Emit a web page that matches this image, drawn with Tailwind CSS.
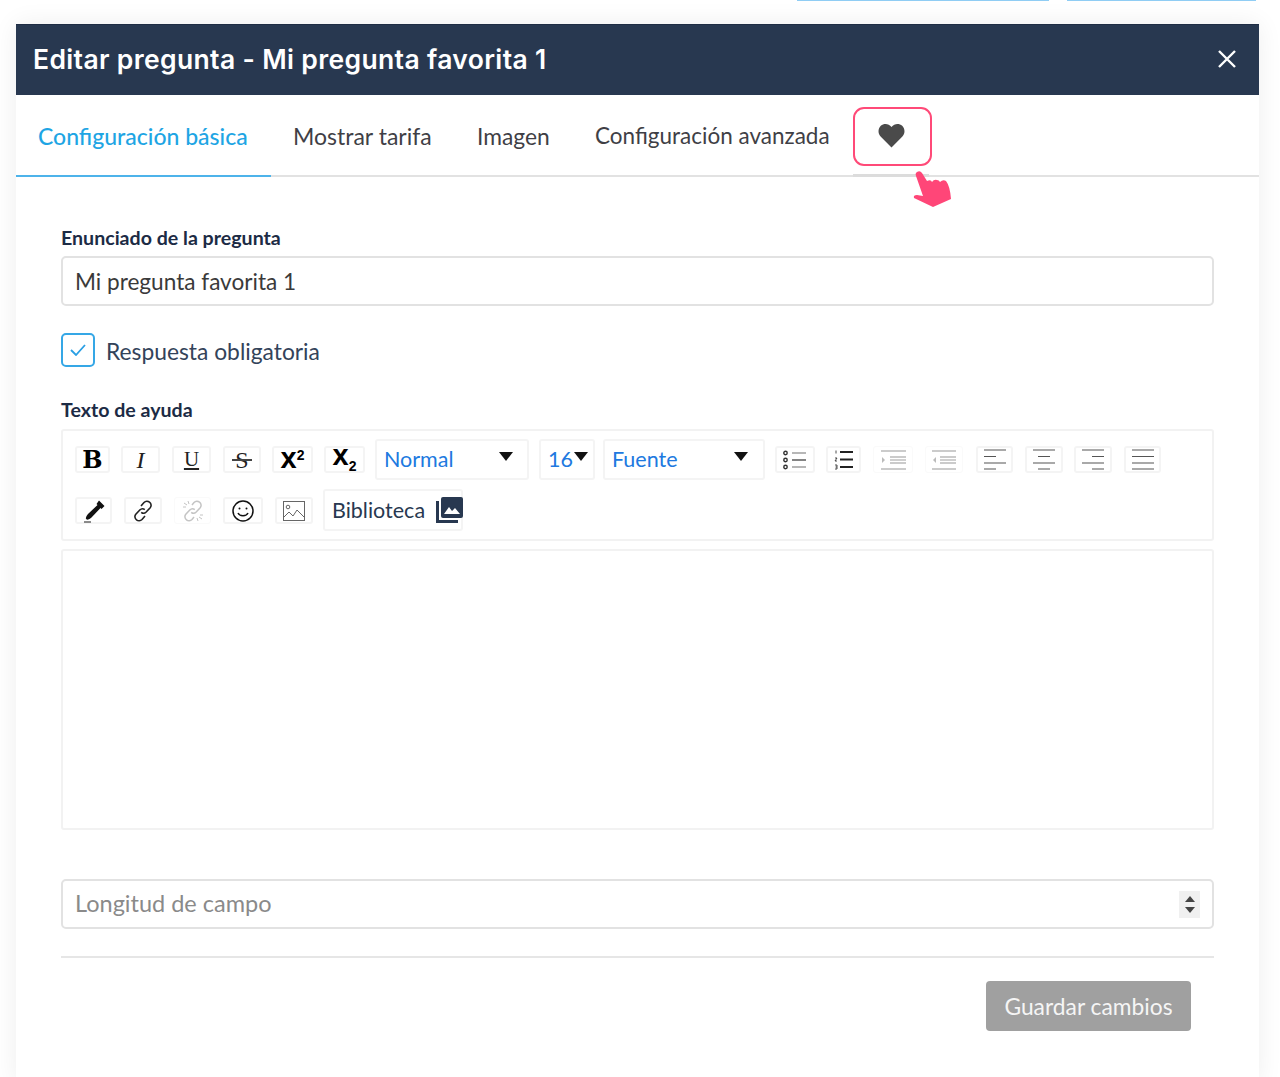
<!DOCTYPE html>
<html lang="es">
<head>
<meta charset="utf-8">
<script src="https://cdn.jsdelivr.net/npm/@tailwindcss/browser@4"></script>
<title>Editar pregunta</title>
</head>
<body class="bg-white font-['Lato','Liberation_Sans',sans-serif] overflow-hidden">
<div class="w-[1280px] h-[1077px] overflow-hidden">
  <div class="flex h-px pl-[797px]">
    <div class="w-[252px] h-px bg-[#90cdf4]"></div>
    <div class="w-[189px] h-px ml-[18px] bg-[#90cdf4]"></div>
  </div>
  <div class="relative mt-[23px] ml-4 w-[1243px] h-[1060px] bg-white shadow-[0_0_24px_rgba(0,0,0,0.07)]">
    <header class="h-[71px] bg-[#283850] flex items-center justify-between pl-[17px] pr-[22px] pb-[1px] border-t border-[#1f2d44]">
      <h1 class="font-['Inter',sans-serif] font-semibold text-[26.5px] tracking-[0.35px] text-white">Editar pregunta - Mi pregunta favorita 1</h1>
      <svg class="w-[20px] h-[20px] -mt-px" viewBox="0 0 20 20" fill="none" stroke="#fff" stroke-width="2.4"><path d="M2 2l16 16M18 2L2 18"/></svg>
    </header>
    <nav class="relative flex h-[82px] border-b-2 border-[#e2e2e2] text-[23px] leading-[34px] text-[#3f3f46]">
      <div class="w-[255px] -mb-[2px] pl-[22px] pt-[24px] font-medium text-[#1ea5e4] border-b-2 border-[#4db3ea]">Configuración básica</div>
      <div class="ml-[22px] pt-[24px] w-[138px] whitespace-nowrap">Mostrar tarifa</div>
      <div class="ml-[46px] pt-[24px] w-[72px] text-[22.8px]">Imagen</div>
      <div class="ml-[46px] pt-[24px] w-[235px] whitespace-nowrap text-[22.5px]">Configuración avanzada</div>
      <div class="ml-[23px] w-[76px] -mb-[2px] flex items-start justify-center pt-[28px] border-b-[3px] border-[#dcdcdc]">
        <svg class="w-[27px] h-[25px]" viewBox="0 0 27 25" fill="#4a4a4a"><path d="M13.5 24.5L2.6 13.6C-0.4 10.4 0 5.5 2.8 2.8 5.8 0 10.6 0.2 13.5 4 16.4 0.2 21.2 0 24.2 2.8 27 5.5 27.4 10.4 24.4 13.6Z"/></svg>
      </div>
      <div class="absolute left-[837px] top-[12px] w-[79px] h-[59px] rounded-[11px] border-[2.5px] border-[#ff4a78]"></div>
      <svg class="absolute left-[896px] top-[75px] w-[40px] h-[40px]" viewBox="0 0 40 40" fill="#ff4678"><path d="M5 2Q8 0 10 3L15 11Q19 9 20 12Q22 9 25 10Q27 10 28 12Q31 9 34 11Q38 16 39 29L21 37L2 28Q1 25 5 25L11 26L4 6Q3 3 5 2Z"/></svg>
    </nav>
    <main class="px-[45px] pt-[50px]">
      <label class="block text-[19.6px] font-bold leading-[21px] text-[#1c2b45]">Enunciado de la pregunta</label>
      <div class="mt-[8px] h-[50px] flex items-center px-[12px] pt-[2px] border-2 border-[#e2e2e2] rounded-[5px] text-[22.6px] text-[#3a3a3a]">Mi pregunta favorita 1</div>
      <div class="mt-[27px] flex items-center h-[33px]">
        <div class="w-[34px] h-[34px] flex items-center justify-center rounded-[5px] border-2 border-[#35a7e6]">
          <svg class="w-[16px] h-[12px]" viewBox="0 0 16 12" fill="none" stroke="#2a9fe4" stroke-width="1.8"><path d="M1 6l5 5 9-10"/></svg>
        </div>
        <span class="ml-[11px] text-[22.8px] text-[#33435a] relative top-[2px]">Respuesta obligatoria</span>
      </div>
      <label class="block mt-[33px] text-[19.6px] font-bold leading-[22px] text-[#1c2b45]">Texto de ayuda</label>

      <div class="mt-[8px] h-[112px] border-2 border-[#f2f2f2] rounded-[3px] pl-[12px]">
        <div class="flex items-start pt-[8px] h-[58px]">
          <div class="mt-[7px] w-[35px] h-[27px] border-2 border-[#f4f4f4] rounded-[3px] flex items-center justify-center font-['DejaVu_Serif',serif] font-bold text-[24px] leading-none text-black">B</div>
          <div class="mt-[7px] ml-[11px] w-[39px] h-[27px] border-2 border-[#f4f4f4] rounded-[3px] flex items-center justify-center font-['Liberation_Serif',serif] italic text-[24px] leading-none text-[#222]">I</div>
          <div class="mt-[7px] ml-[12px] w-[39px] h-[27px] border-2 border-[#f4f4f4] rounded-[3px] flex items-center justify-center font-['Liberation_Serif',serif] underline text-[21px] leading-none text-[#222]">U</div>
          <div class="relative mt-[7px] ml-[12px] w-[38px] h-[27px] border-2 border-[#f4f4f4] rounded-[3px] flex items-center justify-center font-['Liberation_Serif',serif] text-[24px] leading-none text-[#222]">S<span class="absolute left-[7px] right-[7px] top-[11px] h-[2px] bg-[#444]"></span></div>
          <div class="mt-[7px] ml-[11px] w-[41px] h-[27px] border-2 border-[#f4f4f4] rounded-[3px] flex items-center justify-center font-['Liberation_Sans',sans-serif] leading-none text-black"><span class="font-bold text-[29px] relative -top-[1px]">x</span><span class="text-[14px] font-bold relative -top-[5px]">2</span></div>
          <div class="mt-[7px] ml-[11px] w-[41px] h-[27px] border-2 border-[#f4f4f4] rounded-[3px] flex items-center justify-center font-['Liberation_Sans',sans-serif] leading-none text-black"><span class="font-bold text-[29px] relative -top-[4px]">x</span><span class="text-[14px] font-bold relative top-[6px]">2</span></div>
          <div class="ml-[10px] w-[154px] h-[41px] border-2 border-[#f4f4f4] rounded-[3px] flex items-center justify-between pl-[7px] pr-[14px] text-[21.5px] text-[#2079e0]"><span>Normal</span><svg class="w-[14px] h-[9px] -mt-[7px]" viewBox="0 0 14 9" fill="#111"><path d="M0 0h14L7 9z"/></svg></div>
          <div class="ml-[10px] w-[56px] h-[41px] border-2 border-[#f4f4f4] rounded-[3px] flex items-center justify-between pl-[7px] pr-[5px] text-[21.5px] text-[#2079e0]"><span>16</span><svg class="w-[14px] h-[9px] -mt-[7px]" viewBox="0 0 14 9" fill="#111"><path d="M0 0h14L7 9z"/></svg></div>
          <div class="ml-[8px] w-[162px] h-[41px] border-2 border-[#f4f4f4] rounded-[3px] flex items-center justify-between pl-[7px] pr-[15px] text-[21.5px] text-[#2079e0]"><span>Fuente</span><svg class="w-[14px] h-[9px] -mt-[7px]" viewBox="0 0 14 9" fill="#111"><path d="M0 0h14L7 9z"/></svg></div>
          <div class="mt-[7px] ml-[10px] w-[40px] h-[27px] border-2 border-[#f4f4f4] rounded-[3px] flex items-center justify-center">
            <svg class="w-[24px] h-[20px]" viewBox="0 0 24 20" fill="none" stroke="#333"><circle cx="2.5" cy="3" r="1.7" stroke-width="1.4"/><circle cx="2.5" cy="10" r="1.7" stroke-width="1.4"/><circle cx="2.5" cy="17" r="1.7" stroke-width="1.4"/><path d="M9 3h14" stroke="#888" stroke-width="1.2"/><path d="M9 10h14" stroke-width="1.2"/><path d="M9 17h14" stroke="#888" stroke-width="1.2"/></svg>
          </div>
          <div class="mt-[7px] ml-[11px] w-[35px] h-[27px] border-2 border-[#f4f4f4] rounded-[3px] flex items-center justify-center">
            <svg class="w-[20px] h-[21px]" viewBox="0 0 20 21" fill="none" stroke="#222"><path d="M6 3h13M6 10.500h13M6 18h13" stroke-width="1.800"/><path d="M2 1.500v3M1 9h2l-2 3h2M1 16h2v2H1.500M3 18v2H1" stroke-width="0.800"/></svg>
          </div>
          <div class="mt-[7px] ml-[12px] w-[40px] h-[27px] border border-[#fafafa] rounded-[3px] flex items-center justify-center">
            <svg class="w-[25px] h-[20px]" viewBox="0 0 25 20" fill="none" stroke="#bbb" stroke-width="1.400"><path d="M0 1h25M9 7h16M9 13h16M0 19h25"/><path d="M1 7v6l3-3z" fill="#bbb" stroke="none"/><path d="M9 10h16" /></svg>
          </div>
          <div class="mt-[7px] ml-[12px] w-[38px] h-[27px] border border-[#fafafa] rounded-[3px] flex items-center justify-center">
            <svg class="w-[24px] h-[20px]" viewBox="0 0 24 20" fill="none" stroke="#bbb" stroke-width="1.400"><path d="M0 1h24M8 7h16M8 13h16M0 19h24"/><path d="M4 7v6l-3-3z" fill="#bbb" stroke="none"/><path d="M8 10h16"/></svg>
          </div>
          <div class="mt-[7px] ml-[13px] w-[37px] h-[27px] border-2 border-[#f4f4f4] rounded-[3px] flex items-center justify-center">
            <svg class="w-[22px] h-[21px]" viewBox="0 0 22 21" fill="none" stroke="#555" stroke-width="1.200"><path d="M0 1h22M0 7.500h12M0 14h22M0 20h12"/></svg>
          </div>
          <div class="mt-[7px] ml-[12px] w-[38px] h-[27px] border-2 border-[#f4f4f4] rounded-[3px] flex items-center justify-center">
            <svg class="w-[22px] h-[21px]" viewBox="0 0 22 21" fill="none" stroke="#555" stroke-width="1.200"><path d="M0 1h22M5 7.500h12M0 14h22M5 20h12"/></svg>
          </div>
          <div class="mt-[7px] ml-[11px] w-[38px] h-[27px] border-2 border-[#f4f4f4] rounded-[3px] flex items-center justify-center">
            <svg class="w-[22px] h-[21px]" viewBox="0 0 22 21" fill="none" stroke="#555" stroke-width="1.200"><path d="M0 1h22M10 7.500h12M0 14h22M10 20h12"/></svg>
          </div>
          <div class="mt-[7px] ml-[12px] w-[37px] h-[27px] border-2 border-[#f4f4f4] rounded-[3px] flex items-center justify-center">
            <svg class="w-[22px] h-[21px]" viewBox="0 0 22 21" fill="none" stroke="#555" stroke-width="1.200"><path d="M0 1h22M0 7.500h22M0 14h22M0 20h22"/></svg>
          </div>
        </div>
        <div class="flex items-start">
          <div class="mt-[8px] w-[37px] h-[27px] border-2 border-[#f4f4f4] rounded-[3px] flex items-center justify-center">
            <svg class="w-[24px] h-[24px] shrink-0" viewBox="0 0 24 24" fill="#111"><path d="M17 1.500l5.500 5.500-3 3-1-1-9 9.500c-1 1-3 2-4.500 2.200l-1.200-1.200c.2-1.500 1.200-3.500 2.200-4.500l9.500-9-1-1z"/><path d="M2 23h7" fill="none" stroke="#666" stroke-width="1.500"/></svg>
          </div>
          <div class="mt-[8px] ml-[12px] w-[38px] h-[27px] border-2 border-[#f4f4f4] rounded-[3px] flex items-center justify-center">
            <svg class="w-[22px] h-[22px] shrink-0" viewBox="0 0 22 22" fill="none" stroke="#222" stroke-width="1.600"><path d="M9 6l3-3.500c1.500-1.500 4-1.500 5.500-.3 2 1.500 2 4 .7 5.500l-4 4.300c-1.500 1.500-3.500 1.500-5 .3"/><path d="M13 16l-3 3.500c-1.500 1.500-4 1.500-5.500.3-2-1.500-2-4-.7-5.500l4-4.300c1.500-1.500 3.500-1.500 5-.3"/></svg>
          </div>
          <div class="mt-[8px] ml-[12px] w-[37px] h-[27px] border border-[#fafafa] rounded-[3px] flex items-center justify-center">
            <svg class="w-[22px] h-[22px] shrink-0" viewBox="0 0 22 22" fill="none" stroke="#c4c4c4" stroke-width="1.500"><path d="M10 5l2-2.500c1.500-1.500 4-1.500 5.500-.3 2 1.500 2 4 .7 5.500l-4 4.300c-1.500 1.500-3.500 1.500-5 .3"/><path d="M12 17l-2 2.500c-1.500 1.500-4 1.500-5.500.3-2-1.500-2-4-.7-5.500l4-4.300c1.500-1.500 3.500-1.500 5-.3"/><path d="M2 3l3 2M6 1l1 3M1 7l3 0M16 21l-1-3M20 19l-3-2M21 15h-3" stroke-width="1"/></svg>
          </div>
          <div class="mt-[8px] ml-[12px] w-[40px] h-[27px] border-2 border-[#f4f4f4] rounded-[3px] flex items-center justify-center">
            <svg class="w-[22px] h-[22px] shrink-0" viewBox="0 0 22 22" fill="none" stroke="#111" stroke-width="1.500"><circle cx="11" cy="11" r="10"/><circle cx="7.500" cy="8.500" r="1" fill="#111" stroke="none"/><circle cx="14.500" cy="8.500" r="1" fill="#111" stroke="none"/><path d="M6 13c1.500 3.500 8.500 3.500 10 0"/></svg>
          </div>
          <div class="mt-[8px] ml-[12px] w-[38px] h-[27px] border-2 border-[#f4f4f4] rounded-[3px] flex items-center justify-center">
            <svg class="w-[22px] h-[20px] shrink-0" viewBox="0 0 22 20" fill="none" stroke="#666" stroke-width="1"><rect x="0.500" y="0.500" width="21" height="19"/><circle cx="5" cy="6" r="1.800"/><path d="M1 16l5-5 4 4 4-6 7 7"/></svg>
          </div>
          <div class="ml-[10px] w-[140px] h-[42px] border-2 border-[#f4f4f4] rounded-[3px] flex items-center pl-[7px] text-[21.5px] text-[#283850]">
            <span>Biblioteca</span>
            <svg class="ml-[11px] w-[27px] h-[27px] shrink-0 -mt-[1px]" viewBox="0 0 27 27"><path d="M1.500 5v20.500H22" fill="none" stroke="#283850" stroke-width="3"/><rect x="5" y="1" width="22" height="21" rx="2" fill="#283850"/><path d="M8 18l5-7 3 4 3-3 5 6z" fill="#fff"/></svg>
          </div>
        </div>
      </div>

      <div class="mt-[8px] h-[281px] border-2 border-[#f2f2f2] rounded-[3px]"></div>

      <div class="mt-[49px] h-[50px] flex items-center justify-between px-[12px] border-2 border-[#e2e2e2] rounded-[5px] text-[23.5px] text-[#8a8a8a]">
        <span>Longitud de campo</span>
        <div class="w-[21px] h-[27px] bg-[#f0f0f0] flex flex-col items-center justify-center gap-[5px]">
          <svg class="w-[10px] h-[6px]" viewBox="0 0 10 6" fill="#444"><path d="M5 0l5 6H0z"/></svg>
          <svg class="w-[10px] h-[6px]" viewBox="0 0 10 6" fill="#444"><path d="M0 0h10L5 6z"/></svg>
        </div>
      </div>
      <div class="mt-[27px] h-[2px] bg-[#e6e6e6]"></div>
      <div class="mt-[23px] flex justify-end pr-[23px]">
        <button class="w-[205px] h-[50px] bg-[#a0a0a0] rounded-[4px] text-[22.8px] text-[#f5f5f5]">Guardar cambios</button>
      </div>
    </main>
  </div>
</div>
</body>
</html>
